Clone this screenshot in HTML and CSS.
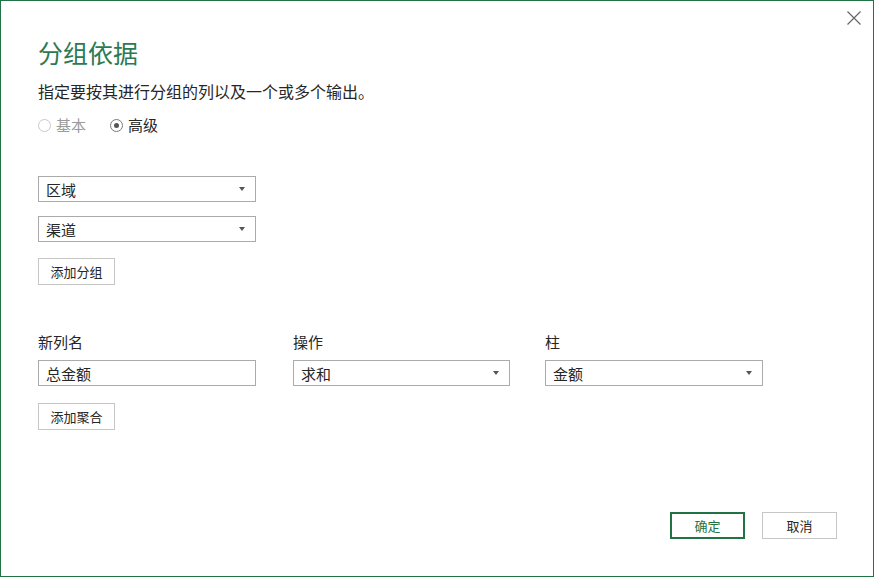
FILE: index.html
```html
<!DOCTYPE html>
<html lang="zh">
<head>
<meta charset="utf-8">
<link rel="stylesheet" href="styles.css">
</head>
<body>
<div class="dialog">
  <button class="close" aria-label="关闭">
    <svg width="14" height="14" viewBox="0 0 14 14"><path d="M0.5 0.5L13.5 13.5M13.5 0.5L0.5 13.5" stroke="#666" stroke-width="1.2" fill="none"/></svg>
  </button>
  <h1 class="title">分组依据</h1>
  <p class="desc">指定要按其进行分组的列以及一个或多个输出。</p>
  <div class="radios">
    <label class="radio disabled"><span class="circle"></span>基本</label>
    <label class="radio"><span class="circle checked"></span>高级</label>
  </div>
  <div class="groups">
    <div class="select"><span>区域</span><span class="arrow"></span></div>
    <div class="select"><span>渠道</span><span class="arrow"></span></div>
    <button class="btn">添加分组</button>
  </div>
  <div class="agg">
    <div class="field f1">
      <div class="label">新列名</div>
      <div class="input">总金额</div>
    </div>
    <div class="field f2">
      <div class="label">操作</div>
      <div class="select"><span>求和</span><span class="arrow"></span></div>
    </div>
    <div class="field f3">
      <div class="label">柱</div>
      <div class="select"><span>金额</span><span class="arrow"></span></div>
    </div>
  </div>
  <button class="btn agg-btn">添加聚合</button>
  <div class="footer">
    <button class="btn primary">确定</button>
    <button class="btn cancel">取消</button>
  </div>
</div>
</body>
</html>
```

FILE: styles.css
```css
html, body {
  margin: 0;
  padding: 0;
  background: #fff;
}
body {
  font-family: "Noto Sans CJK SC", "Microsoft YaHei", sans-serif;
  font-size: 15px;
  color: #262626;
}
.dialog {
  position: relative;
  box-sizing: border-box;
  width: 874px;
  height: 577px;
  border: 1px solid #217346;
  padding: 0 0 0 37px;
  display: flex;
  flex-direction: column;
}
.close {
  position: absolute;
  top: 10px;
  right: 12px;
  border: none;
  background: none;
  padding: 0;
  width: 14px;
  height: 14px;
  line-height: 0;
}
.title {
  margin: 34px 0 0 0;
  font-size: 25px;
  font-weight: normal;
  line-height: 34px;
  color: #2b7a53;
}
.desc {
  margin: 11px 0 0 0;
  font-size: 16px;
  line-height: 22px;
  color: #262626;
}
.radios {
  display: flex;
  gap: 24px;
  margin-top: 12px;
  height: 22px;
  align-items: center;
}
.radio {
  display: flex;
  align-items: center;
  gap: 5px;
  font-size: 15px;
  line-height: 20px;
}
.radio.disabled { color: #9a9a9a; }
.circle {
  box-sizing: border-box;
  width: 13px;
  height: 13px;
  border-radius: 50%;
  border: 1px solid #c8c8c8;
  background: #fff;
  position: relative;
}
.circle.checked { border-color: #7a7a7a; }
.circle.checked::after {
  content: "";
  position: absolute;
  left: 3px;
  top: 3px;
  width: 5px;
  height: 5px;
  border-radius: 50%;
  background: #555;
}
.groups {
  margin-top: 40px;
  display: flex;
  flex-direction: column;
  align-items: flex-start;
  gap: 14px;
}
.select, .input {
  box-sizing: border-box;
  width: 218px;
  height: 26px;
  border: 1px solid #ababab;
  background: #fff;
  display: flex;
  align-items: center;
  justify-content: space-between;
  padding: 0 8px 0 7px;
  font-size: 15px;
  color: #262626;
}
.arrow {
  width: 0;
  height: 0;
  border-left: 3.5px solid transparent;
  border-right: 3.5px solid transparent;
  border-top: 4px solid #555;
  margin-right: 2px;
}
.btn {
  box-sizing: border-box;
  font-family: inherit;
  font-size: 13px;
  color: #262626;
  background: #fff;
  border: 1px solid #c6c6c6;
  height: 27px;
  width: 77px;
  padding: 0;
  cursor: default;
}
.groups .btn { margin-top: 2px; }
.agg {
  margin-top: 47px;
  display: flex;
}
.field {
  display: flex;
  flex-direction: column;
  gap: 8px;
}
.label {
  font-size: 15px;
  line-height: 20px;
  color: #262626;
}
.f1 { width: 255px; }
.f2 { width: 252px; }
.f2 .select { width: 217px; }
.f1 .input { justify-content: flex-start; }
.agg-btn { margin-top: 17px; }
.footer {
  margin-top: auto;
  margin-bottom: 37px;
  margin-right: 36px;
  display: flex;
  justify-content: flex-end;
  gap: 17px;
}
.footer .btn {
  width: 75px;
  height: 27px;
  font-size: 13px;
}
.btn.primary {
  border: 2px solid #217346;
  color: #217346;
}
```
